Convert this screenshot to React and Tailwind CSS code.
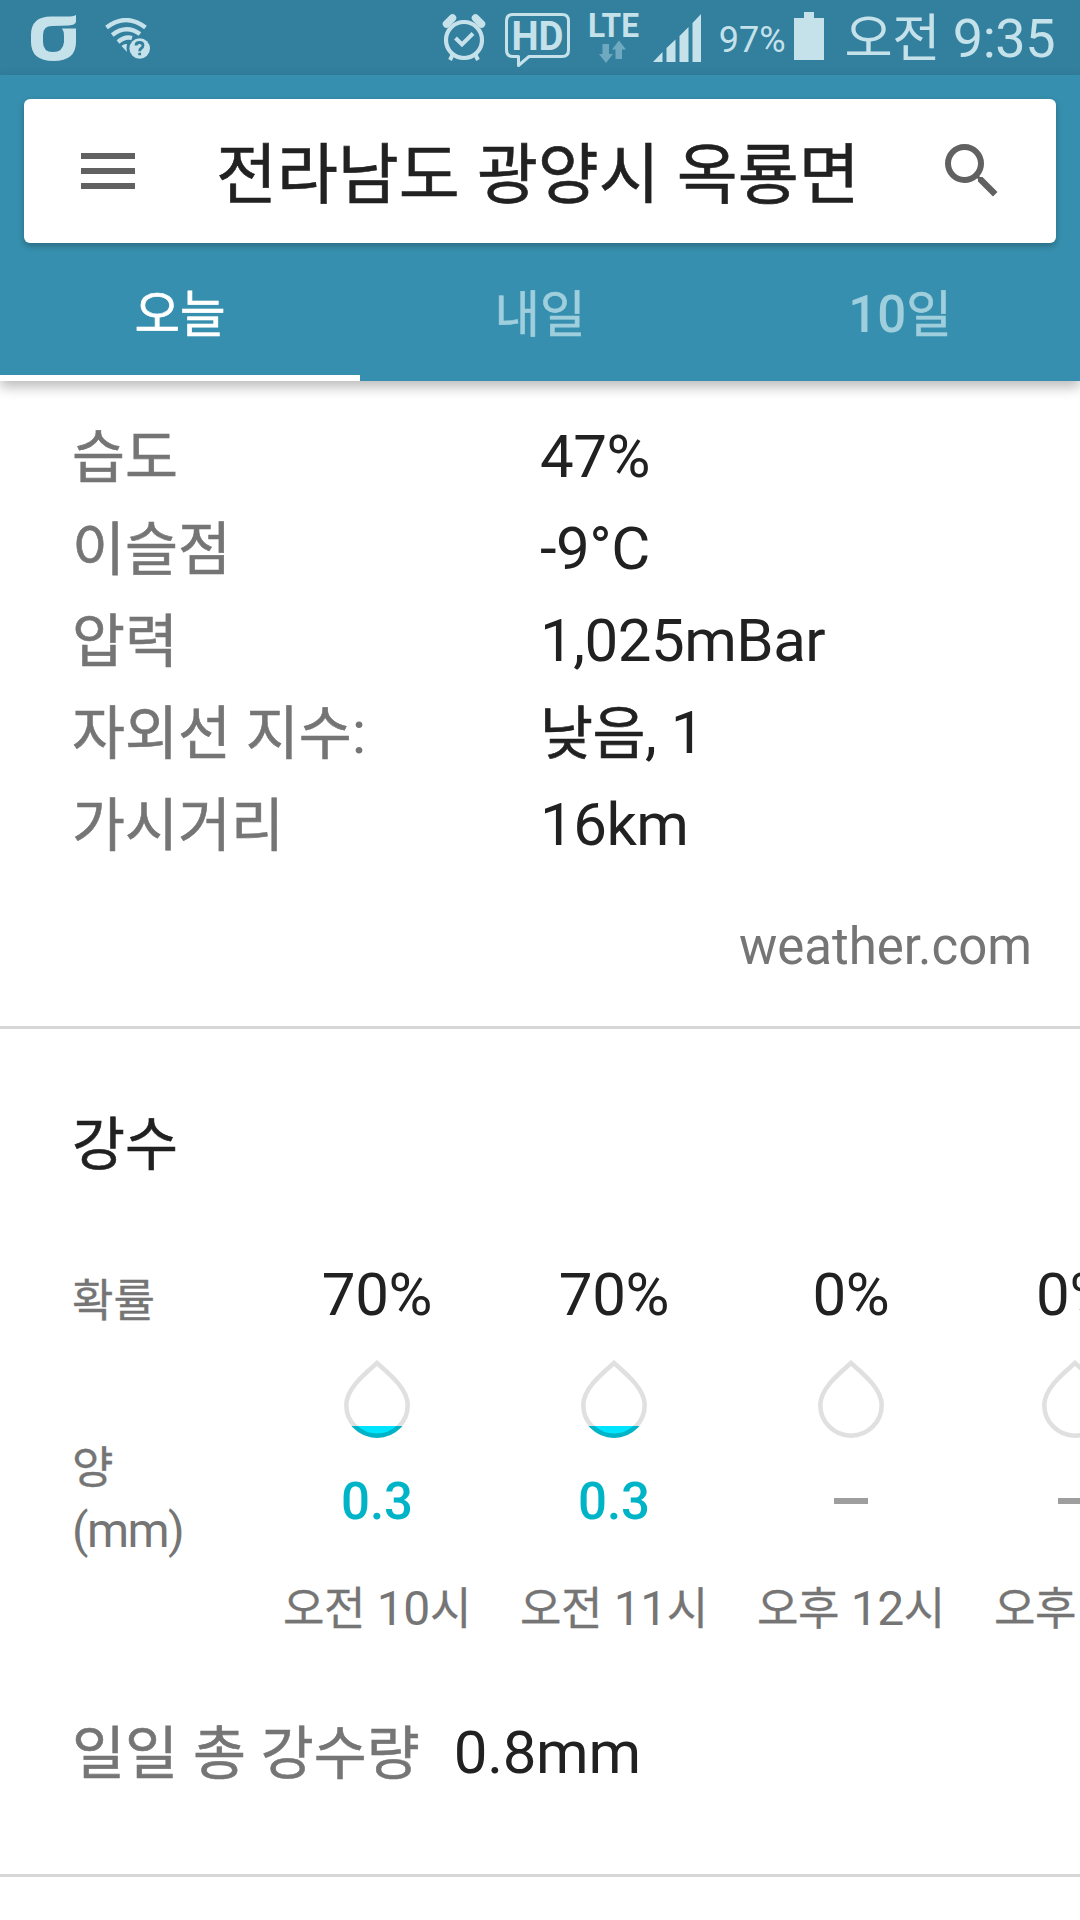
import { Fragment } from "react";
import { MdMenu, MdSearch } from "react-icons/md";

const details = [
  { label: "습도", value: "47%" },
  { label: "이슬점", value: "-9°C" },
  { label: "압력", value: "1,025mBar" },
  { label: "자외선 지수:", value: "낮음, 1" },
  { label: "가시거리", value: "16km" },
];

const hours = [
  { time: "오전 10시", chance: "70%", amount: "0.3" },
  { time: "오전 11시", chance: "70%", amount: "0.3" },
  { time: "오후 12시", chance: "0%", amount: null },
  { time: "오후 1시", chance: "0%", amount: null },
];

const tabs = ["오늘", "내일", "10일"];

// Hangul runs slightly smaller and a touch heavier than the Latin text beside it
function T({ children, hangul = "text-[0.96em] font-normal align-[-1px] [-webkit-text-stroke:0.6px]" }) {
  return children.split(/([가-힣]+)/).map((part, i) =>
    i % 2 ? (
      <span key={i} className={hangul}>{part}</span>
    ) : (
      <Fragment key={i}>{part}</Fragment>
    )
  );
}

const smallHangul = "text-[0.94em] [-webkit-text-stroke:0.3px]";
const tabHangul = "text-[0.97em] font-normal [-webkit-text-stroke:0.6px]";

function CarrierIcon() {
  return (
    <svg className="mt-px ml-[31px] h-[46px] w-[45px]" viewBox="0 0 45 46" fill="currentColor">
      <path d="M20 1.500H36Q42 1.500 45 0V7Q44 10 38 10.500L21 11Q12 11 12 20V27Q12 37 22 37T33 27V21Q33 16 31 13.500H45V27Q45 46 22.500 46T0 27V20Q0 1.500 20 1.500Z" />
    </svg>
  );
}

function WifiIcon() {
  return (
    <svg className="mt-[3px] ml-[29px] h-[42px] w-[46px]" viewBox="0 0 46 42">
      <g fill="none" stroke="currentColor" strokeWidth="4.300">
        <path d="M1.500 9.500Q21 -5.500 40.500 9.500" />
        <path d="M7.200 17Q21 6 35 16" />
        <path d="M13 24Q20 18 27 20" />
      </g>
      <path d="M16.500 28Q19 25.500 22 26Q21 30 22 34Z" fill="currentColor" />
      <circle cx="34.700" cy="30.500" r="10.300" fill="currentColor" />
      <path d="M31 27.500Q31 24.500 34.500 24.500T38 27.500Q38 29.300 36 30.500Q34.700 31.400 34.700 33.200M34.700 34.700V37.300" fill="none" stroke="#327f9e" strokeWidth="2.800" />
    </svg>
  );
}

function AlarmIcon() {
  return (
    <svg className="h-[48px] w-[44px]" viewBox="0 0 44 48" fill="none" stroke="currentColor">
      <circle cx="22" cy="26" r="18" strokeWidth="4.200" />
      <path d="M4.500 10L10.500 4M39.500 10L33.500 4" strokeWidth="7.500" strokeLinecap="round" />
      <path d="M10.500 41L8 46M33.500 41L36 46" strokeWidth="4" />
      <path d="M13.500 24L20 30.500L31 19.500" strokeWidth="4" />
    </svg>
  );
}

function HdIcon() {
  return (
    <svg className="mt-[5px] ml-[19px] h-[55px] w-[65px]" viewBox="0 0 65 55">
      <path d="M8 1.500H57Q63.500 1.500 63.500 8V37Q63.500 43.500 57 43.500H24L13.500 52.500V43.500H8Q1.500 43.500 1.500 37V8Q1.500 1.500 8 1.500Z" fill="none" stroke="currentColor" strokeWidth="3" strokeLinejoin="round" />
      <text x="32.500" y="36.500" textAnchor="middle" textLength="52" lengthAdjust="spacingAndGlyphs" fontSize="40" fontWeight="700" fill="currentColor">HD</text>
    </svg>
  );
}

function LteIcon() {
  return (
    <svg className="mt-[3px] ml-[19px] h-[52px] w-[50px] overflow-visible" viewBox="0 0 50 52">
      <text x="-1" y="24" textLength="51" lengthAdjust="spacingAndGlyphs" fontSize="33" fontWeight="700" fill="currentColor">LTE</text>
      <path d="M13.500 31H20V41H24L17 50L10 41H13.500Z" fill="#6fa9c0" />
      <path d="M26.500 46H33V36.500H37L30 27.500L23 36.500H26.500Z" fill="#6fa9c0" />
    </svg>
  );
}

function SignalIcon() {
  return (
    <svg className="ml-[14px] h-[48px] w-[48px]" viewBox="0 0 48 48" fill="currentColor">
      <path d="M0 48L9.500 38V48ZM13.500 34L22.500 25.500V48H13.500ZM26.500 22L35.500 13V48H26.500ZM39.500 9L48 0V48H39.500Z" />
    </svg>
  );
}

function BatteryIcon() {
  return (
    <svg className="-mt-[3px] ml-[8px] h-[48px] w-[30px]" viewBox="0 0 30 48" fill="currentColor">
      <path d="M10 0H20V6H30V48H0V6H10Z" />
    </svg>
  );
}

function Drop({ filled }) {
  const shape = "M33 3C23 12 2.300 28 2.300 45A30.700 30.700 0 0 0 63.700 45C63.700 28 43 12 33 3Z";
  return (
    <svg className="h-[78px] w-[66px]" viewBox="0 0 66 78">
      <clipPath id="level">
        <rect y="66" width="66" height="12" />
      </clipPath>
      <path d={shape} fill="none" stroke="#e0e0e0" strokeWidth="4.500" />
      {filled && <path d={shape} fill="#00e5ff" stroke="#00b4c8" strokeWidth="4.500" clipPath="url(#level)" />}
    </svg>
  );
}

function StatusBar() {
  return (
    <div className="flex h-[75px] items-center bg-[#327f9e] text-[#c5e1ea]">
      <CarrierIcon />
      <WifiIcon />
      <div className="ml-auto flex items-center pr-[25px]">
        <AlarmIcon />
        <HdIcon />
        <LteIcon />
        <SignalIcon />
        <span className="mt-[4px] ml-[18px] text-[36px]">97%</span>
        <BatteryIcon />
        <span className="mt-[3px] ml-[21px] text-[54px] leading-[72px] tracking-[-0.5px]"><T hangul="text-[0.97em]">오전 9:35</T></span>
      </div>
    </div>
  );
}

export default function App() {
  return (
    <div className="h-[1920px] w-[1080px] overflow-hidden bg-white font-['Roboto','Noto_Sans_CJK_KR',sans-serif] whitespace-nowrap text-[#212121]">
      <StatusBar />
      <header className="flex h-[306px] flex-col bg-[#368fae] px-6 pt-6 shadow-[0_6px_12px_rgba(0,0,0,0.27)]">
        <div className="flex h-[144px] shrink-0 items-center rounded-[6px] bg-white px-12 shadow-[0_3px_6px_rgba(0,0,0,0.25)]">
          <MdMenu className="size-[72px] text-[#616161]" />
          <h1 className="mt-[8px] ml-[72px] text-[69px] leading-[100px]"><T>전라남도 광양시 옥룡면</T></h1>
          <MdSearch className="ml-auto size-[72px] text-[#616161]" />
        </div>
        <nav className="-mx-6 grid h-[138px] grid-cols-3 text-center text-[51px] leading-[118px] font-medium">
          {tabs.map((tab, i) => (
            <button key={tab} className={i === 0 ? "border-b-[6px] border-white pt-3 text-white" : "border-b-[6px] border-transparent pt-3 text-[#9fcedd]"}>
              <T hangul={tabHangul}>{tab}</T>
            </button>
          ))}
        </nav>
      </header>

      <section className="h-[648px] border-b-[3px] border-[#d6d6d6] pt-[30px] text-[60px] leading-[92px]">
        {details.map((d) => (
          <div key={d.label} className="flex h-[92px] pl-[72px]">
            <span className="w-[468px] text-[#757575]"><T>{d.label}</T></span>
            <span className="tracking-[-0.5px]"><T>{d.value}</T></span>
          </div>
        ))}
        <p className="mt-[46px] pr-[48px] text-right text-[51px] leading-[60px] text-[#757575]">weather.com</p>
      </section>

      <section className="h-[848px] border-b-[3px] border-[#d6d6d6] pt-[69px]">
        <h2 className="pl-[72px] text-[60px] leading-[92px]"><T>강수</T></h2>
        <div className="mt-[57px] flex h-[402px] pl-[72px] text-[#757575]">
          <div className="w-[211px] shrink-0 pt-[20px] text-[48px] leading-[64px]">
            <p><T hangul={smallHangul}>확률</T></p>
            <p className="pt-[102px]"><T hangul={smallHangul}>양</T></p>
            <p className="-mt-[2px] tracking-[-1.5px]">(mm)</p>
          </div>
          <div className="flex gap-[49px]">
            {hours.map((h) => (
              <div key={h.time} className="flex shrink-0 flex-col items-center">
                <span className="text-[60px] leading-[92px] tracking-[-0.3px] text-[#212121]">{h.chance}</span>
                <div className="mt-[19px]"><Drop filled={h.amount !== null} /></div>
                <div className="mt-[32px] flex h-[62px] items-center text-[51px] font-medium text-[#00b4c8]">
                  {h.amount ? <span className="mt-[2px]">{h.amount}</span> : <span className="h-[6px] w-[34px] bg-[#9e9e9e]" />}
                </div>
                <span className="mt-[45px] text-[48px] leading-[64px] tracking-[-0.4px]"><T hangul={smallHangul}>{h.time}</T></span>
              </div>
            ))}
          </div>
        </div>
        <p className="mt-[56px] flex gap-[34px] pl-[72px] text-[60px] leading-[92px]">
          <span className="text-[#757575]"><T>일일 총 강수량</T></span>
          <span className="tracking-[-0.3px]">0.8mm</span>
        </p>
      </section>
    </div>
  );
}
